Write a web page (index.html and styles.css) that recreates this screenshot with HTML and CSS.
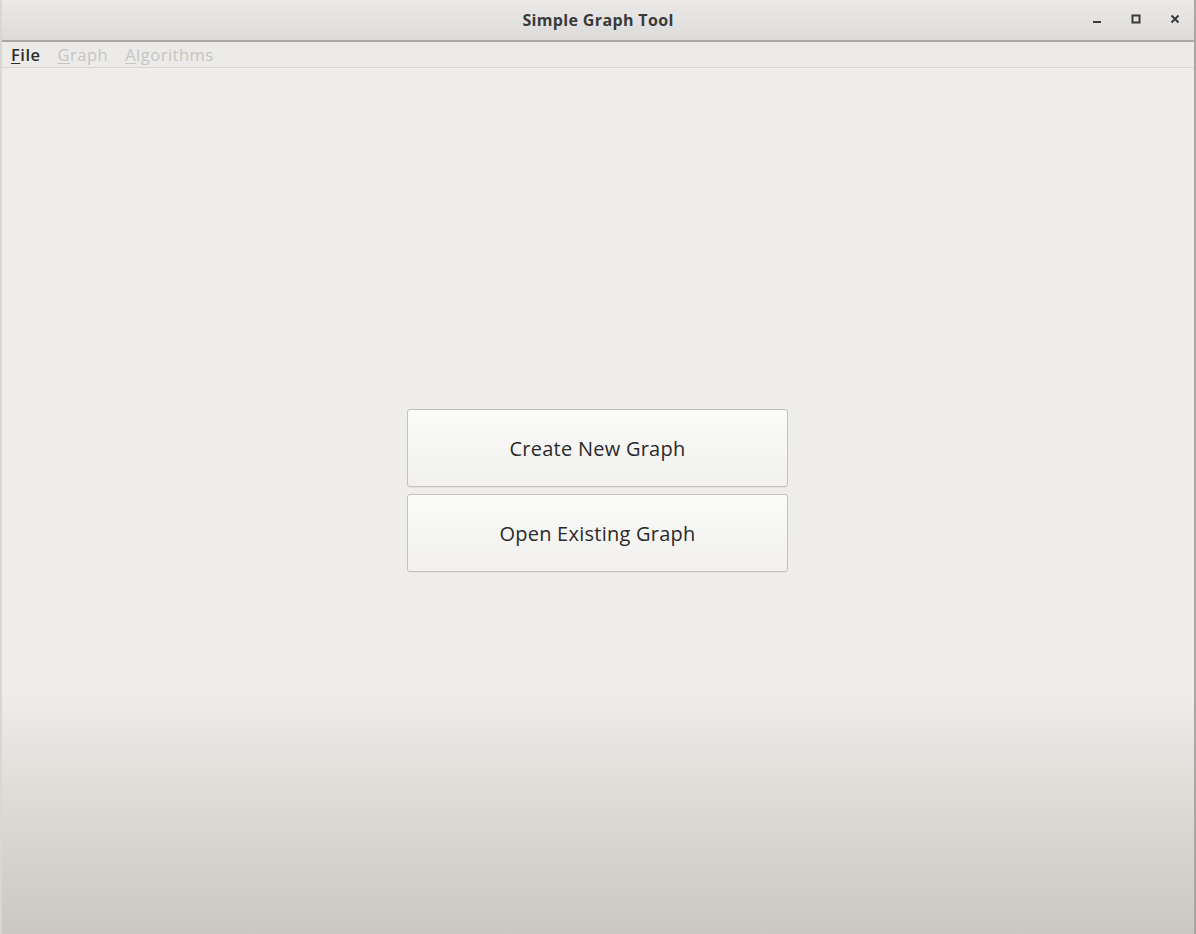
FILE: index.html
```html
<!DOCTYPE html>
<html>
<head>
<meta charset="utf-8">
<link rel="stylesheet" href="styles.css">
</head>
<body>
<div class="window">
  <header class="titlebar">
    <div class="title">Simple Graph Tool</div>
    <div class="controls">
      <span class="ctl">
        <svg width="12" height="12" viewBox="0 0 12 12"><rect x="2" y="8" width="8" height="2" fill="#3b3b3b"/></svg>
      </span>
      <span class="ctl">
        <svg width="12" height="12" viewBox="0 0 12 12"><rect x="2.5" y="2.5" width="7" height="7" fill="none" stroke="#3b3b3b" stroke-width="2"/></svg>
      </span>
      <span class="ctl">
        <svg width="12" height="12" viewBox="0 0 12 12"><path d="M2.5 2.5 L9.5 9.5 M9.5 2.5 L2.5 9.5" stroke="#3b3b3b" stroke-width="2"/></svg>
      </span>
    </div>
  </header>
  <nav class="menubar">
    <span class="menu active"><u>F</u>ile</span>
    <span class="menu disabled"><u>G</u>raph</span>
    <span class="menu disabled"><u>A</u>lgorithms</span>
  </nav>
  <main class="content">
    <div class="buttons">
      <button class="btn">Create New Graph</button>
      <button class="btn">Open Existing Graph</button>
    </div>
  </main>
</div>
</body>
</html>
```

FILE: styles.css
```css
* { box-sizing: border-box; }
html, body { margin: 0; padding: 0; height: 100%; }
body {
  font-family: "Open Sans", "Noto Sans", "DejaVu Sans", sans-serif;
  background: #efedea;
}
.window {
  width: 1196px;
  height: 934px;
  display: flex;
  flex-direction: column;
  border-left: 2px solid #d9d7d4;
  border-right: 2px solid #a9a7a4;
}
.titlebar {
  height: 42px;
  flex: 0 0 42px;
  background: linear-gradient(#ebeae8, #dddbd9);
  border-bottom: 2px solid #a9a7a5;
  display: flex;
  align-items: center;
  justify-content: center;
  position: relative;
}
.title {
  font-size: 16px;
  font-weight: 700;
  color: #3a3a3a;
  letter-spacing: 0.35px;
}
.controls {
  position: absolute;
  right: 13px;
  top: 13px;
  display: flex;
  gap: 27px;
}
.ctl { width: 12px; height: 12px; display: block; }
.ctl svg { display: block; }
.menubar {
  height: 26px;
  flex: 0 0 26px;
  background: #edebe9;
  border-bottom: 1px solid #d8d6d3;
  display: flex;
  align-items: center;
  padding-left: 9px;
  gap: 17px;
  font-size: 16.5px;
  letter-spacing: 0.5px;
}
.menu u { text-decoration-thickness: 1px; text-underline-offset: 2px; }
.menu.active { color: #2c2c2c; font-weight: 600; }
.menu.disabled { color: #c6c4c1; }
.content {
  flex: 1;
  background: linear-gradient(#efedea 0%, #efedea 72%, #e3e0dc 81%, #d6d3cf 91%, #cbc8c4 100%);
  display: flex;
  justify-content: center;
  padding-top: 341px;
}
.buttons {
  display: flex;
  flex-direction: column;
  gap: 7px;
  margin-left: -1px;
}
.btn {
  width: 381px;
  height: 78px;
  border: 1px solid #c3c1be;
  border-radius: 3px;
  background: linear-gradient(#fbfbfa, #f1f0ee);
  font-family: "Open Sans", "Noto Sans", "DejaVu Sans", sans-serif;
  font-size: 20px;
  letter-spacing: 0.25px;
  color: #2a2a2a;
  padding: 0;
  box-shadow: 0 1px 0 rgba(0,0,0,0.04);
}
```
